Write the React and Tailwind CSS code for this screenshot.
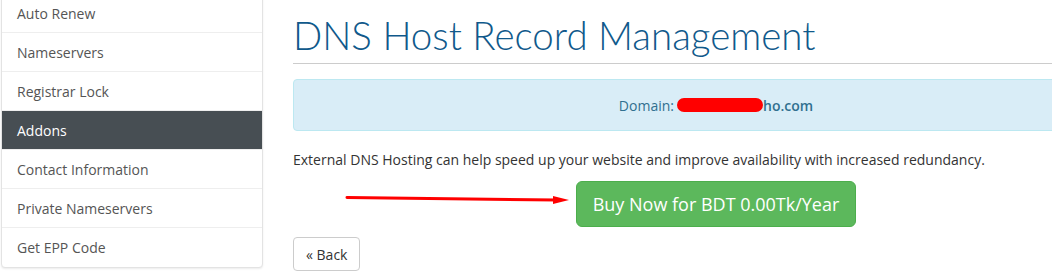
export default function App() {
  const items = [
    "Auto Renew",
    "Nameservers",
    "Registrar Lock",
    "Addons",
    "Contact Information",
    "Private Nameservers",
    "Get EPP Code",
  ];
  return (
    <div
      className="relative flex w-[1052px] h-[276px] overflow-hidden bg-white text-[14px] text-[#333]"
      style={{ fontFamily: '"Open Sans", "Liberation Sans", sans-serif' }}
    >
      {/* Sidebar */}
      <div className="ml-[1px] mt-[-7px] w-[262px] shrink-0 self-start">
        <div className="rounded-b-[4px] border border-[#e3e3e3] bg-white shadow-[0_1px_2px_rgba(0,0,0,0.08)] overflow-hidden">
          {items.map((it, i) => (
            <div
              key={it}
              className={
                "h-[39px] flex items-center pl-[15px] " +
                (i < items.length - 1 ? "border-b border-[#eeeeee] " : "") +
                (it === "Addons" ? "bg-[#474e53] text-white" : "text-[#555]")
              }
            >
              {it}
            </div>
          ))}
        </div>
      </div>

      {/* Content */}
      <div className="ml-[30px] w-[846px] shrink-0">
        <h1
          className="mt-[14px] pb-[7px] border-b border-[#cccccc] text-[38.5px] leading-[42px] text-[#10598b] font-light"
          style={{ fontFamily: '"Lato", "Open Sans", sans-serif' }}
        >
          DNS Host Record Management
        </h1>
        <div className="mt-[15px] h-[52px] rounded-[4px] border border-[#bce8f1] bg-[#d9edf7] text-[#31708f] flex items-center justify-center">
          <span>Domain: </span>
          <span className="inline-block ml-[3px] w-[86px] h-[14px] rounded-full bg-[#ff0000]" />
          <span className="font-semibold">ho.com</span>
        </div>
        <p className="mt-[19px] leading-[20px]">
          External DNS Hosting can help speed up your website and improve availability with increased redundancy.
        </p>
        <div className="mt-[11px] flex justify-center">
          <button className="h-[46px] px-[16px] rounded-[6px] border border-[#4cae4c] bg-[#5cb85c] text-white text-[18px]">
            Buy Now for BDT 0.00Tk/Year
          </button>
        </div>
        <div className="mt-[10px]">
          <button className="h-[34px] px-[12px] rounded-[4px] border border-[#cccccc] bg-white text-[#333] text-[14px]">
            « Back
          </button>
        </div>
      </div>

      {/* Red annotation arrow */}
      <svg className="absolute left-0 top-0 pointer-events-none" width="1052" height="276">
        <line x1="347" y1="197.5" x2="556" y2="200" stroke="#ff0000" strokeWidth="3" strokeLinecap="round" />
        <polygon points="553,196 569,200 553,204" fill="#ff0000" />
      </svg>
    </div>
  );
}
